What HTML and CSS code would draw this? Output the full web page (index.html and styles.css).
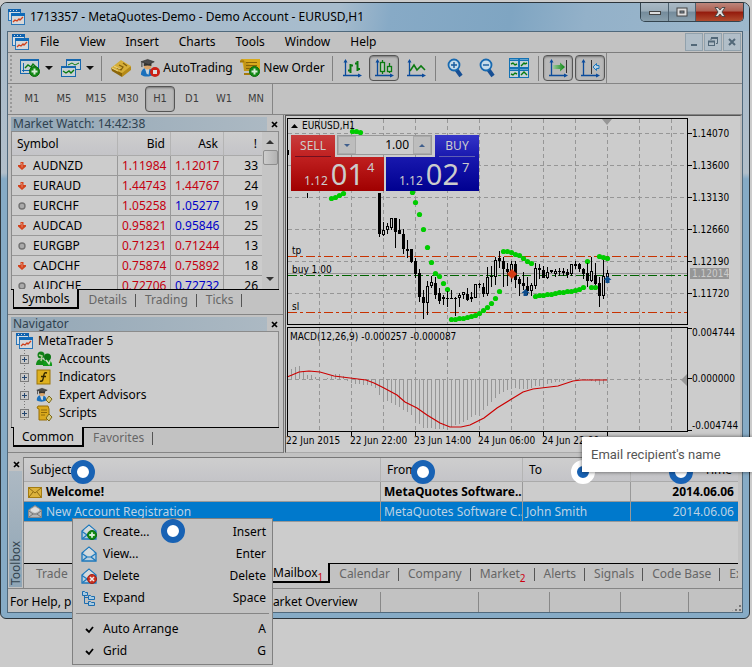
FILE: index.html
```html
<!DOCTYPE html>
<html lang="en">
<head>
<meta charset="utf-8">
<title>1713357 - MetaQuotes-Demo - Demo Account - EURUSD,H1</title>
<link rel="stylesheet" href="styles.css">
</head>
<body>
<svg class="defs" width="0" height="0" aria-hidden="true">
  <defs>
    <linearGradient id="gold" x1="0" y1="0" x2="1" y2="1"><stop offset="0" stop-color="#e0c04a"/><stop offset="1" stop-color="#a87a00"/></linearGradient>
    <linearGradient id="arrowGreen"><stop offset="0" stop-color="#9cc89c"/><stop offset="1" stop-color="#0a8a10"/></linearGradient>
    <symbol id="app" viewBox="0 0 17 16">
      <rect x="0.5" y="0.5" width="12" height="11" fill="#d5dde4" stroke="#2a76b8"/><rect x="0" y="0" width="13" height="3" fill="#0f62ae"/>
      <path d="M2 1.5h1M5 1.5h1M8 1.5h1" stroke="#c8d8e6"/>
      <rect x="3.5" y="4.500" width="13" height="11" fill="#d8d8d8" stroke="#2a76b8"/><rect x="3" y="4" width="14" height="3" fill="#0f6ab8"/>
      <path d="M5 13l2-2 2 1 2-2 1 1 3-3" fill="none" stroke="#d0401c" stroke-width="1.300"/>
    </symbol>
    <symbol id="plus" viewBox="0 0 11 11"><circle cx="5.500" cy="5.500" r="5" fill="#128a14" stroke="#0a6a0c"/><path d="M5.500 2.500v6M2.500 5.500h6" stroke="#d8ecd8" stroke-width="2"/></symbol>
    <symbol id="hat" viewBox="0 0 20 20">
      <path d="M1 17c0-5 3-7 6-7s7 2 7 7c-3 2-9 3-13 0z" fill="#1a70bc"/><path d="M5 10h5l-1 7-2-1z" fill="#c8d4dc"/>
      <circle cx="8" cy="7.500" r="4" fill="#d8a468"/><path d="M4 5h8v3c-2-1-6-1-8 0z" fill="#333"/>
      <path d="M1 3.500L8 1l7 2.500L9 6.500z" fill="#4a4a4a" stroke="#222" stroke-width=".6"/><path d="M2 4v5" stroke="#333"/>
    </symbol>
    <symbol id="openmail" viewBox="0 0 16 16">
      <path d="M1 7l7-6 7 6v8H1z" fill="#b9cfde" stroke="#1c78bc" stroke-width="1.300"/>
      <path d="M3.500 8V5.500L8 2l4.500 3.500V8L8 10.500z" fill="#d4dadd"/>
      <path d="M1 7.500l5 3.500h4l5-3.500M1.500 14.500L6 11M14.500 14.500L10 11" fill="none" stroke="#1c78bc" stroke-width="1.200"/>
    </symbol>
    <symbol id="axes" viewBox="0 0 20 19"><path d="M3.500 2v15M1 16.500h17" stroke="#0b4b9c" stroke-width="1.300" fill="none"/><path d="M1.500 3.500L3.500 0l2 3.500zM16 14.500l4 2-4 2z" fill="#0b4b9c"/></symbol>
    <symbol id="down" viewBox="0 0 8 8"><path d="M2.500 0h3v3H8v1.500L4 8 0 4.500V3h2.500z" fill="#d2421c"/><path d="M3 1.500h1v4" stroke="#e88868" fill="none"/></symbol>
    <symbol id="flat" viewBox="0 0 8 8"><circle cx="4" cy="4" r="3" fill="#aaa" stroke="#737373" stroke-width="1.400"/></symbol>
  </defs>
</svg>

<div class="window">
  <header class="titlebar">
    <svg class="app-icon" width="17" height="16"><use href="#app"/></svg>
    <h1 class="title">1713357 - MetaQuotes-Demo - Demo Account - EURUSD,H1</h1>
    <div class="caption-buttons">
      <button class="cap min" aria-label="Minimize"><svg width="12" height="10"><rect x=".5" y="4.500" width="11" height="3" fill="#ddd" stroke="#444"/></svg></button>
      <button class="cap max" aria-label="Maximize"><svg width="12" height="10"><rect x="1" y="1" width="10" height="8" fill="#ddd" stroke="#444"/><rect x="4" y="4" width="4" height="2" fill="#789" stroke="#444"/></svg></button>
      <button class="cap close" aria-label="Close"><svg width="12" height="10"><path d="M1 .5h3l2 2.500 2-2.500h3L8 5l3 4.500H8L6 7 4 9.500H1L4 5z" fill="#ddd" stroke="#444" stroke-width=".9"/></svg></button>
    </div>
  </header>

  <div class="client">
    <nav class="menubar">
      <svg class="menu-icon" width="17" height="16"><use href="#app"/></svg>
      <button>File</button><button>View</button><button>Insert</button><button>Charts</button><button>Tools</button><button>Window</button><button>Help</button>
      <div class="mdi">
        <button aria-label="Minimize chart"><svg width="10" height="10"><path d="M2 8h6" stroke="#526878" stroke-width="2"/></svg></button>
        <button aria-label="Restore chart"><svg width="10" height="10"><path d="M3 3V1.500h6.500v5H8" fill="none" stroke="#526878"/><path d="M3 1h7" stroke="#526878" stroke-width="2"/><rect x=".5" y="4.500" width="6" height="4" fill="none" stroke="#526878"/><path d="M0 4.500h7" stroke="#526878" stroke-width="2"/></svg></button>
        <button aria-label="Close chart"><svg width="10" height="10"><path d="M2 2l6 6M8 2L2 8" stroke="#526878" stroke-width="2"/></svg></button>
      </div>
    </nav>

    <div class="toolrow">
      <div class="toolbar">
        <i class="grip"></i>
        <button class="tool wide" aria-label="New chart">
          <svg width="21" height="20"><rect x=".500" y="1.500" width="18" height="14" fill="#c8d0d4" stroke="#1768ae"/><path d="M0 2h19" stroke="#1768ae" stroke-width="2"/><path d="M3.500 5v9M2 12.500h14" stroke="#1768ae"/><path d="M5 10l3-3 3 2 2-3 3 3" fill="none" stroke="#0a7a10" stroke-width="1.400"/><use href="#plus" x="9" y="8" width="11" height="11"/></svg>
          <i class="caret"></i>
        </button>
        <button class="tool wide" aria-label="Profiles">
          <svg width="21" height="20"><rect x="5.500" y="1.500" width="14" height="10" fill="#c8d0d4" stroke="#1768ae"/><path d="M5 2h15" stroke="#1768ae" stroke-width="2"/><path d="M7 7l4-2 3 2 4-2" stroke="#0a7a10" fill="none"/><rect x=".500" y="8.500" width="14" height="10" fill="#c8d0d4" stroke="#1768ae"/><path d="M0 9h15" stroke="#1768ae" stroke-width="2"/><path d="M2 13l3 2 3-2 2 2 3-3" fill="none" stroke="#0a7a10" stroke-width="1.400"/></svg>
          <i class="caret"></i>
        </button>
        <i class="sep"></i>
        <button class="tool" aria-label="Market depth"><svg width="21" height="18"><path d="M0 9L10 1l10 7-9 9z" fill="url(#gold)"/><path d="M0 9l11 5v4L1 12z" fill="#8b6508"/><path d="M11 14l9-7v4l-9 7z" fill="#b58a18"/><path d="M0 9L11 2l9 5-9 7z" fill="#d6ae38"/><path d="M8 6l4 2-2 3-4-2M12 4l4 3" stroke="#82600c" stroke-width="1.300" fill="none"/><path d="M1 9l6 3M3 7l6 3" stroke="#ead487"/></svg></button>
        <button class="tool auto"><svg width="21" height="20"><use href="#hat" width="19" height="20"/><circle cx="15" cy="14" r="5" fill="#cc2015"/><rect x="13" y="12" width="4" height="4" fill="#ddd"/></svg>AutoTrading</button>
        <button class="tool order"><svg width="21" height="20"><path d="M2 1h18v12H4z" fill="#d7a91c"/><path d="M2 1c-2 0-2 3 0 3h2v9h15" fill="#c19416"/><path d="M6 4.500h11M6 7.500h11M6 10.500h6" stroke="#866408" stroke-width="1.200"/><path d="M0 3.500h4M4 16h6" stroke="#a57a08" stroke-width="2"/><use href="#plus" x="9" y="8" width="11" height="11"/></svg>New Order</button>
        <i class="sep"></i>
        <button class="tool" aria-label="Bar chart"><svg width="20" height="19"><use href="#axes" width="20" height="19"/><path d="M8.500 5v9M6 11.500h2M9 6.500h2M15.500 2v10M13 4.500h2M16 10h2" stroke="#0a7a10" stroke-width="2"/></svg></button>
        <button class="tool on" aria-label="Candlesticks"><svg width="20" height="19"><use href="#axes" width="20" height="19"/><path d="M8.500 1v14M15.500 4v10" stroke="#0a7a10" stroke-width="1.300"/><rect x="6.500" y="3.500" width="4" height="9" fill="#bcc8bc" stroke="#0a7a10" stroke-width="1.300"/><rect x="13.500" y="7.500" width="4" height="5" fill="#bcc8bc" stroke="#0a7a10" stroke-width="1.300"/></svg></button>
        <button class="tool" aria-label="Line chart"><svg width="20" height="19"><use href="#axes" width="20" height="19"/><path d="M4 12l4-6 3 5 4-4 4 4" fill="none" stroke="#0a7a10" stroke-width="1.600"/></svg></button>
        <i class="sep"></i>
        <button class="tool lens" aria-label="Zoom in"><svg width="17" height="20"><path d="M9 11l5 7" stroke="#174f94" stroke-width="4"/><circle cx="7" cy="7" r="5.500" fill="#c5dcea" stroke="#1769b0" stroke-width="1.800"/><path d="M7 4v6M4 7h6" stroke="#155a9d" stroke-width="1.400"/></svg></button>
        <button class="tool lens" aria-label="Zoom out"><svg width="17" height="20"><path d="M9 11l5 7" stroke="#174f94" stroke-width="4"/><circle cx="7" cy="7" r="5.500" fill="#c5dcea" stroke="#1769b0" stroke-width="1.800"/><path d="M4 7h6" stroke="#155a9d" stroke-width="1.400"/></svg></button>
        <button class="tool" aria-label="Tile windows"><svg width="20" height="20"><rect width="20" height="20" fill="#1472b4"/><path d="M1 3h8v6H1zM11 3h8v6h-8zM1 13h8v6H1zM11 13h8v6h-8z" fill="#c6d2d8"/><path d="M1 1.500h8M11 1.500h8M1 11.500h8M11 11.500h8" stroke="#5fa2cf"/><path d="M2 6l2-1 2 2 2-1M12 8l3-3 1 1 2-1M2 16l2 1 2-2 2 1M12 17l3-3 3 3" fill="none" stroke="#0a7a10" stroke-width="1.400"/></svg></button>
        <i class="sep"></i>
        <button class="tool on" aria-label="Auto scroll"><svg width="20" height="19"><use href="#axes" width="20" height="19"/><path d="M18.500 1v13" stroke="#333"/><path d="M5 6h7V3.500L17 8l-5 4.500V10H5z" fill="url(#arrowGreen)"/></svg></button>
        <button class="tool on" aria-label="Chart shift"><svg width="20" height="19"><use href="#axes" width="20" height="19"/><path d="M11.500 1v14" stroke="#333"/><path d="M13 8l3.500-3.500v2H19v3h-2.500v2z" fill="#b8d2e4" stroke="#1b78bf"/></svg></button>
      </div>
    </div>

    <div class="toolrow">
      <div class="toolbar frames">
        <i class="grip"></i>
        <button>M1</button><button>M5</button><button>M15</button><button>M30</button><button class="on">H1</button><button>D1</button><button>W1</button><button>MN</button>
      </div>
    </div>

    <main class="workspace">
      <aside class="side">
        <section class="panel">
          <div class="panel-head"><h2>Market Watch: 14:42:38</h2><button class="x" aria-label="Close Market Watch"><svg width="7" height="7"><path d="M1 1l5 5M6 1L1 6" stroke="#000" stroke-width="1.700"/></svg></button></div>
          <div class="watch">
            <table class="quotes">
              <colgroup><col class="c-sym"><col class="c-price"><col class="c-price"><col class="c-spread"></colgroup>
              <thead><tr><th>Symbol</th><th>Bid</th><th>Ask</th><th>!</th></tr></thead>
              <tbody>
                <tr><td><svg width="8" height="8"><use href="#down"/></svg>AUDNZD</td><td class="r">1.11984</td><td class="r">1.12017</td><td>33</td></tr>
                <tr><td><svg width="8" height="8"><use href="#down"/></svg>EURAUD</td><td class="r">1.44743</td><td class="r">1.44767</td><td>24</td></tr>
                <tr><td><svg width="8" height="8"><use href="#flat"/></svg>EURCHF</td><td class="r">1.05258</td><td class="b">1.05277</td><td>19</td></tr>
                <tr><td><svg width="8" height="8"><use href="#down"/></svg>AUDCAD</td><td class="r">0.95821</td><td class="b">0.95846</td><td>25</td></tr>
                <tr><td><svg width="8" height="8"><use href="#flat"/></svg>EURGBP</td><td class="r">0.71231</td><td class="r">0.71244</td><td>13</td></tr>
                <tr><td><svg width="8" height="8"><use href="#down"/></svg>CADCHF</td><td class="r">0.75874</td><td class="r">0.75892</td><td>18</td></tr>
                <tr><td><svg width="8" height="8"><use href="#flat"/></svg>AUDCHF</td><td class="r">0.72706</td><td class="b">0.72732</td><td>26</td></tr>
              </tbody>
            </table>
            <div class="scrollbar"><i class="up"></i><i class="thumb"></i><i class="dn"></i></div>
          </div>
          <div class="tabs"><button class="active">Symbols</button><button>Details</button><button>Trading</button><button>Ticks</button></div>
        </section>

        <section class="panel nav-panel">
          <div class="panel-head"><h2>Navigator</h2><button class="x" aria-label="Close Navigator"><svg width="7" height="7"><path d="M1 1l5 5M6 1L1 6" stroke="#000" stroke-width="1.700"/></svg></button></div>
          <ul class="tree">
            <li class="root"><svg width="17" height="16"><use href="#app"/></svg>MetaTrader 5</li>
            <li><i class="expand"></i><svg width="17" height="16"><circle cx="5" cy="4" r="3.500" fill="#118018"/><path d="M0 14c0-8 10-8 10 0z" fill="#128d18"/><path d="M3 4l3 1-1 5" fill="none" stroke="#b6cf9a" stroke-width="1.500"/><circle cx="11.500" cy="6" r="3.500" fill="#0b7512"/><path d="M7 15c-1-8 10-8 9 0z" fill="#129a1b"/><path d="M10 9l3 4 1-3" fill="none" stroke="#cfe0c4" stroke-width="1.500"/></svg>Accounts</li>
            <li><i class="expand"></i><svg width="17" height="16"><rect x="1" y="1" width="13" height="14" fill="#deb11f" stroke="#9c7508"/><path d="M11 4c-3-1-3 1-3.500 4S6.500 13 4 12M5 7.500h5" fill="none" stroke="#332600" stroke-width="1.400"/></svg>Indicators</li>
            <li><i class="expand"></i><svg width="17" height="16"><use href="#hat" width="15" height="16"/><path d="M13 9l3 3-3 4-3-3z" fill="#d8c97c" stroke="#7b6716"/></svg>Expert Advisors</li>
            <li><i class="expand"></i><svg width="17" height="16"><path d="M2 1h10l1 3v9l-2 2H3V4L1 3z" fill="#daa91c" stroke="#986f08"/><path d="M5 5h6M5 7.500h6M5 10h4" stroke="#8f6a08"/><path d="M13 9l3 3-3 4-3-3z" fill="#d8c97c" stroke="#7b6716"/></svg>Scripts</li>
          </ul>
          <div class="tabs"><button class="active">Common</button><button>Favorites</button></div>
        </section>
      </aside>

      <section class="chart">
        <svg id="plot" class="plot" viewBox="286 117 454 334" preserveAspectRatio="xMinYMin meet" role="img" aria-label="EURUSD,H1 chart"></svg>
        <div class="trade">
          <button class="deal sell"><span class="side-name">SELL</span><span class="price"><small>1.12</small><b>01</b><sup>4</sup></span></button>
          <button class="deal buy"><span class="side-name">BUY</span><span class="price"><small>1.12</small><b>02</b><sup>7</sup></span></button>
          <div class="volume"><button aria-label="Less"><i class="caret blue"></i></button><input aria-label="Volume" value="1.00"><button aria-label="More"><i class="caret blue flip"></i></button></div>
        </div>
      </section>
    </main>

    <section class="toolbox">
      <div class="strip"><button class="x" aria-label="Close Toolbox"><svg width="7" height="7"><path d="M1 1l5 5M6 1L1 6" stroke="#000" stroke-width="1.700"/></svg></button><h2>Toolbox</h2></div>
      <div class="box">
        <table class="mail">
          <colgroup><col><col class="m-from"><col class="m-to"><col class="m-time"></colgroup>
          <thead><tr><th>Subject</th><th>From</th><th>To</th><th>Time</th></tr></thead>
          <tbody>
            <tr class="unread"><td><svg width="14" height="12"><rect x=".500" y="1.500" width="13" height="10" fill="#dcb23c" stroke="#a47c10"/><path d="M1 2l6 5 6-5M1 11l4-5M13 11L9 6" fill="none" stroke="#8d6a10"/></svg>Welcome!</td><td>MetaQuotes Software...</td><td></td><td>2014.06.06</td></tr>
            <tr class="selected"><td><svg width="14" height="13"><path d="M.500 5L7 .500 13.500 5v7.500H.500z" fill="#b5b5b5" stroke="#888"/><path d="M3 6V4l4-2 4 2v2L7 8z" fill="#ddd"/><path d="M1 6l4 3h4l4-3M1 12l4-3M13 12L9 9" fill="none" stroke="#777"/></svg>New Account Registration</td><td>MetaQuotes Software C...</td><td>John Smith</td><td>2014.06.06</td></tr>
          </tbody>
        </table>
        <div class="tabs"><button class="first">Trade</button><button class="active mailbox">Mailbox<em>1</em></button><button>Calendar</button><button>Company</button><button>Market<em>2</em></button><button>Alerts</button><button>Signals</button><button>Code Base</button><button>Ex</button></div>
      </div>
    </section>

    <footer class="status"><span class="help">For Help, press F1</span><span class="profile">Market Overview</span><span class="s1"></span><span class="s2"></span><span class="s3"></span><span class="s4"></span><span class="sizer"></span></footer>
  </div>
</div>

<i class="marker m1"></i><i class="marker m2"></i><i class="marker inverse m3"></i><i class="marker m4"></i>

<div class="context" role="menu">
  <button role="menuitem"><svg width="16" height="16"><use href="#openmail"/><use href="#plus" x="6" y="6" width="10" height="10"/></svg><span>Create...</span><kbd>Insert</kbd></button>
  <button role="menuitem"><svg width="16" height="16"><use href="#openmail"/></svg><span>View...</span><kbd>Enter</kbd></button>
  <button role="menuitem"><svg width="16" height="16"><use href="#openmail"/><circle cx="11" cy="11" r="4.500" fill="#cc3322" stroke="#a02014"/><path d="M9 9l4 4M13 9l-4 4" stroke="#eee" stroke-width="1.500"/></svg><span>Delete</span><kbd>Delete</kbd></button>
  <button role="menuitem"><svg width="16" height="16"><path d="M3.500 4v9.500H7M3.500 7.500H7" fill="none" stroke="#1b6caf"/><path d="M1.500 1.500h2l1 1h2v3h-5zM7.500 5.500h2l1 1h3v3h-6zM7.500 11.500h2l1 1h3v3h-6z" fill="#a8cbe2" stroke="#1b6caf"/></svg><span>Expand</span><kbd>Space</kbd></button>
  <hr>
  <button role="menuitemcheckbox" aria-checked="true"><svg width="16" height="16"><path d="M5 8l3 3 4-5" fill="none" stroke="#000" stroke-width="1.800"/></svg><span>Auto Arrange</span><kbd>A</kbd></button>
  <button role="menuitemcheckbox" aria-checked="true"><svg width="16" height="16"><path d="M5 8l3 3 4-5" fill="none" stroke="#000" stroke-width="1.800"/></svg><span>Grid</span><kbd>G</kbd></button>
</div>
<i class="marker m5"></i>
<div class="tooltip" role="tooltip">Email recipient's name</div>
<script src="chart.js"></script>
</body>
</html>
```
FILE: styles.css
```css
* { box-sizing: border-box; }
body { margin: 0; background: #cbcbcb; font: 12px/16px "Noto Sans", "Open Sans", sans-serif; color: #000; overflow: hidden; }
button { font: inherit; color: inherit; border: 0; padding: 0; margin: 0; background: none; }
h1, h2 { font: inherit; margin: 0; }
svg { display: block; flex: none; }
.defs { position: absolute; }

.window { margin: 2px 2px 0 0; border: 1px solid #2c343a; border-radius: 7px 7px 6px 6px; padding: 0 6px 5px; background: linear-gradient(#a5bacb 0, #b2bfca 170px, #86abc6 176px, #86abc6 100%); }
.titlebar { display: flex; align-items: flex-start; height: 28px; margin: 0 -6px; padding-left: 7px; border-radius: 6px 6px 0 0; background: linear-gradient(100deg, #a9bccb 0, #a7bccd 45%, #87aac6 52%, #7fa5c2 68%, #93b1c9 78%, #9db8cc 100%); }
.app-icon { margin: 6px 5px 0 0; }
.title { flex: 1; line-height: 28px; white-space: nowrap; }
.caption-buttons { display: flex; margin-right: 5px; border: 1px solid #33444f; border-top: 0; border-radius: 0 0 5px 5px; overflow: hidden; }
.cap { height: 18px; display: grid; place-items: center; border-right: 1px solid #4d606e; background: linear-gradient(#a9b9c5 0, #9badb9 45%, #748b9b 50%, #899fac 100%); }
.cap.min { width: 28px; }
.cap.max { width: 27px; }
.cap.close { width: 47px; border: 0; background: linear-gradient(#bd867c 0, #ae5e50 45%, #941a0c 50%, #b04b2e 100%); }
.client { border: 1px solid #50697c; background: #c2c2c2; }

.menubar { display: flex; align-items: center; height: 21px; padding-left: 4px; gap: 20px; border-bottom: 1px solid #7d7d7d; }
.menu-icon { margin-right: -9px; }
.mdi { display: flex; gap: 1px; margin: 0 1px 0 auto; }
.mdi button { width: 18px; height: 18px; display: grid; place-items: center; border: 1px solid #91a1ac; background: #b1bec8; }

.toolrow { height: 31px; border-bottom: 1px solid #858585; }
.toolbar { display: inline-flex; align-items: center; height: 30px; border-right: 1px solid #858585; }
.grip { width: 4px; height: 26px; margin: 0 2px; background: repeating-linear-gradient(#999 0 2px, #c2c2c2 2px 4px) 0 0 / 2px 100% no-repeat; }
.sep { width: 1px; height: 25px; margin: 0 3px; background: #808080; }
.tool { display: flex; align-items: center; justify-content: center; width: 30px; height: 26px; margin: 0 1px; gap: 2px; white-space: nowrap; }
.tool.wide { width: 39px; gap: 4px; }
.tool.auto { width: 97px; }
.tool.order { width: 91px; }
.on { border: 1px solid #555; border-radius: 4px; background: #b9b9b9; box-shadow: inset 0 1px 2px #777; }
.caret { border: 4px solid transparent; border-top-color: #111; border-bottom: 0; }
.caret.blue { border-width: 3px; border-bottom: 0; border-top-color: #3f5e8c; display: block; }
.caret.flip { transform: rotate(180deg); }
.frames button { width: 32px; height: 26px; font: 11px/24px "DejaVu Sans Condensed", sans-serif; color: #3c3c3c; }
.frames .on { width: 30px; margin: 0 1px; }

.workspace { display: flex; }
.side { flex: 0 0 276px; border-right: 1px solid #777; }
.panel { padding: 2px 4px 0 3px; height: 199px; }
.nav-panel { height: 139px; border-top: 1px solid #858585; border-bottom: 1px solid #858585; }
.panel-head { display: flex; justify-content: space-between; align-items: center; height: 14px; margin-right: -2px; }
.panel-head h2 { flex: 1; padding-left: 2px; line-height: 14px; color: #30424f; background: linear-gradient(90deg, #93a7b6, #acb9c3); }
.x { width: 14px; height: 14px; display: grid; place-items: center; }
.watch { display: flex; height: 158px; overflow: hidden; background: #ccc; border: 1px solid #8b8b8b; border-width: 1px 1px 0; }
table { border-collapse: separate; border-spacing: 0; table-layout: fixed; }
th { font-weight: normal; text-align: left; }
td, th { padding: 0; overflow: hidden; white-space: nowrap; }
.quotes { flex: 1; width: 100px; }
.c-price { width: 53px; }
.c-spread { width: 38px; }
.quotes th { height: 24px; background: linear-gradient(#cecece, #c4c4c8); border-right: 1px solid #b4b4b4; border-bottom: 1px solid #aaa; padding: 0 5px; }
.quotes td { height: 20px; border-right: 1px solid #999; border-bottom: 1px solid #999; padding: 0 4px; line-height: 19px; }
.quotes tr > :not(:first-child) { text-align: right; }
.quotes tr > :last-child { border-right: 0; }
.quotes td svg { display: inline-block; margin: 0 7px 0 2px; }
.quotes .r { color: #c40010; }
.quotes .b { color: #0000c8; }
.scrollbar { width: 16px; display: flex; flex-direction: column; align-items: center; background: #c5c5c5; padding: 8px 0; }
.up, .dn { border: 4px solid transparent; border-top: 0; border-bottom-color: #333; }
.dn { margin-top: auto; border-top: 4px solid #333; border-bottom: 0; }
.thumb { width: 15px; height: 15px; margin-top: 6px; border: 1px solid #8d8d8d; border-radius: 2px; background: linear-gradient(90deg, #cdcdcd, #b2b2b2); }

.tabs { display: flex; height: 20px; padding-left: 2px; border-top: 1px solid #000; color: #666; }
.tabs button { flex: none; padding: 0 9px; line-height: 19px; height: 19px; background: linear-gradient(#555, #555) right 4px / 1px 13px no-repeat; }
.tabs .active { height: 20px; margin-top: -1px; padding: 0 8px; color: #000; background: #ccc; border: 1px solid #000; border-top: 0; border-right-width: 2px; border-bottom-width: 2px; }

.tree { list-style: none; margin: 0; padding: 0; height: 96px; background: #ccc; border: 1px solid #8b8b8b; border-width: 1px 1px 0; }
.tree li { display: flex; align-items: center; height: 18px; padding-left: 8px; gap: 6px; background: repeating-linear-gradient(#777 0 1px, transparent 1px 3px) 12px 0 / 1px 100% no-repeat; }
.tree .root { padding-left: 4px; gap: 5px; background: none; }
.expand { width: 9px; height: 9px; margin-right: 1px; border: 1px solid #7c7c7c; background: linear-gradient(#24466e, #24466e) center / 5px 1px no-repeat, linear-gradient(#24466e, #24466e) center / 1px 5px no-repeat, #c8c8c8; outline: 1px solid #ccc; }

.chart { position: relative; flex: 1; min-width: 0; border-left: 1px solid #555; border-top: 1px solid #555; margin-left: 1px; background: #ccc; border-right: 2px solid #bbb; border-bottom: 1px solid #aaa; }
.plot { width: 100%; height: 334px; font: 10px "DejaVu Sans Condensed", "DejaVu Sans", sans-serif; margin-top: 1px; }
.trade { position: absolute; left: 5px; top: 19px; display: flex; gap: 2px; }
.deal { width: 93px; height: 56px; display: flex; flex-direction: column; color: #ccc; text-align: left; }
.sell { background: linear-gradient(#c83c3c 0, #c02020 22px, #a00000 56px); clip-path: polygon(0 0, 44px 0, 44px 22px, 100% 22px, 100% 100%, 0 100%); }
.buy { background: linear-gradient(#3535c8 0, #1818ae 22px, #000090 56px); clip-path: polygon(49px 0, 100% 0, 100% 100%, 0 100%, 0 22px, 49px 22px); align-items: flex-end; }
.side-name { width: 36px; margin: 0 4px; height: 22px; line-height: 22px; text-align: center; border-bottom: 1px solid #701020; }
.buy .side-name { border-color: #6060b4; }
.price { display: flex; width: 100%; height: 34px; padding-left: 13px; align-items: baseline; }
.price small { font-size: 12px; }
.price b { font: 29px/34px "Noto Sans", sans-serif; margin-left: 3px; }
.price sup { font-size: 13px; line-height: 14px; align-self: flex-start; margin: 3px 0 0 3px; }
.volume { position: absolute; left: 46px; top: 0; width: 95px; height: 20px; display: flex; border: 1px solid #999; background: #ccc; }
.volume button { width: 18px; display: grid; place-items: center; background: #bdbdbd; border: 1px solid #aaa; }
.volume input { flex: 1; min-width: 0; font: inherit; text-align: right; border: 0; padding: 0 4px; background: none; }

.toolbox { display: flex; height: 135px; padding: 4px 4px 0 1px; }
.strip { width: 14px; display: flex; flex-direction: column; }
.strip h2 { writing-mode: vertical-rl; transform: rotate(180deg); flex: 1; line-height: 13px; margin: 0 1px 1px 0; padding-top: 2px; color: #33444f; background: linear-gradient(#8fa5b5, #adb9c3); }
.box { flex: 1; min-width: 0; border-left: 1px solid #888; border-top: 1px solid #777; background: #ccc; display: flex; flex-direction: column; overflow: hidden; }
.mail { width: 100%; }
.m-from { width: 142px; }
.m-to { width: 108px; }
.m-time { width: 107px; }
.mail th { height: 24px; background: linear-gradient(#cecece, #c4c4c8); border-right: 1px solid #b4b4b4; border-bottom: 1px solid #aaa; padding: 0 6px; }
.mail td { height: 20px; border-right: 1px solid #999; border-bottom: 1px solid #999; padding: 0 0 0 3px; line-height: 19px; }
.mail td:first-child { padding-left: 4px; }
.mail td svg { display: inline-block; vertical-align: middle; margin: -2px 4px 0 0; }
.mail tr > :last-child { text-align: right; border-right: 0; }
.mail td:last-child { padding-right: 4px; }
.unread { font-weight: bold; }
.selected { background: #0079cc; color: #bcd2e4; }
.box .tabs { margin-top: auto; height: 25px; background: #c2c2c2; padding-left: 3px; flex: none; white-space: nowrap; }
.tabs .first { width: 239px; text-align: left; background: none; }
.tabs .mailbox { padding: 0 5px 0 6px; }
.tabs em { font: 10px/10px "Noto Sans", sans-serif; color: #cc0010; position: relative; top: 4px; }
.status { display: flex; height: 24px; border-top: 1px solid #858585; white-space: nowrap; }
.status span { border-right: 1px solid #888; margin-top: 3px; line-height: 20px; }
.status .help { width: 250px; padding-left: 2px; border: 0; }
.profile { flex: 1; padding-left: 4px; }
.s1 { width: 98px; }
.s2, .s3 { width: 71px; }
.s4 { width: 68px; }
.status .sizer { width: 53px; border: 0; background: radial-gradient(#777 1px, transparent 1px) right bottom / 4px 4px; clip-path: polygon(100% 50%, 100% 100%, 42px 100%); }

.marker { position: absolute; width: 24px; height: 24px; border-radius: 50%; border: 6px solid #1862b4; background: #fff; }
.inverse { border-color: #fff; background: #1862b4; }
.m1 { left: 71px; top: 460px; }
.m2 { left: 411px; top: 460px; }
.m3 { left: 571px; top: 460px; }
.m4 { left: 669px; top: 460px; }
.m5 { left: 161px; top: 519px; }
.context { position: absolute; left: 72px; top: 518px; width: 201px; padding: 2px 3px; border: 1px solid #808080; background: #c2c2c2; }
.context button { display: flex; align-items: center; width: 100%; height: 22px; padding: 0 3px 0 5px; }
.context span { flex: 1; text-align: left; margin-left: 6px; }
.context kbd { font: inherit; }
.context hr { margin: 4px 0; border: 0; border-top: 1px solid #858585; }
.tooltip { position: absolute; left: 582px; right: 0; top: 437px; height: 35px; padding-left: 9px; line-height: 35px; background: #fff; color: #555; font-family: Roboto, "Noto Sans", sans-serif; font-size: 13px; box-shadow: 0 0 4px rgba(0, 0, 0, .6); white-space: nowrap; }
```
FILE: chart.js
```js
// Candles: x, high, low, body top, body bottom, filled
const candles = [
  [379,193,237,193,234,1],[383,222,236,230,235,0],[387,223,234,226,230,0],[391,218,230,218,228,0],[395,218,248,218,232,1],
  [399,219,234,230,234,1],[403,229,254,234,249,1],[407,240,258,249,251,1],[411,249,263,249,262,1],[415,258,278,261,274,1],
  [419,269,302,273,297,1],[423,290,319,297,303,1],[427,281,315,286,303,0],[431,276,288,282,286,0],[435,277,299,283,295,1],
  [439,288,304,293,301,1],[443,295,305,297,299,1],[447,291,307,298,299,1],[451,290,298,298,299,1],[455,297,316,298,299,1],
  [459,293,307,295,298,0],[463,292,299,292,295,0],[467,288,301,294,300,1],[471,292,302,297,299,0],[475,284,298,284,298,0],
  [479,283,288,284,285,1],[483,283,297,287,294,1],[487,267,296,277,294,0],[491,266,287,276,277,1],[495,257,285,260,277,0],
  [499,251,268,258,261,1],[503,257,287,261,269,1],[507,263,286,269,272,1],[511,261,282,264,274,0],[515,261,288,264,280,1],
  [519,277,296,279,284,1],[523,272,290,283,286,1],[527,277,295,286,291,1],[531,283,296,285,291,0],[535,263,289,268,286,0],
  [539,264,279,268,270,1],[543,266,278,270,278,1],[547,267,279,272,278,0],[551,270,273,270,272,1],[555,269,277,271,274,0],
  [559,268,276,271,272,1],[563,268,276,271,273,1],[567,269,278,272,275,1],[571,264,276,264,274,0],[575,261,269,264,266,1],
  [579,263,272,264,269,1],[583,268,279,269,274,1],[587,263,287,273,281,1],[591,257,282,271,281,0],[595,263,285,275,284,1],
  [599,277,307,283,296,1],[603,260,299,276,296,0],[607,270,277,273,277,0]
];
// Parabolic SAR points
const sar = [
  [331,198],[335,197],[339,195],[343,193],[352,131],[356,131],[360,132],[412,192],[415,202],[419,214],[423,229],[427,247],[431,262],
  [435,273],[439,276],[443,283],[447,289],[451,319],[455,319],[459,318],[463,318],[467,317],[471,316],[475,315],[479,313],[483,310],
  [487,307],[491,303],[495,298],[499,291],[503,251],[507,251],[511,252],[515,254],[519,255],[523,258],[527,261],[531,263],[535,296],
  [539,295],[543,295],[547,294],[551,294],[555,293],[559,292],[563,292],[567,291],[571,291],[575,290],[579,289],[583,287],[587,261],
  [591,287],[595,287],[599,256],[603,257],[607,258]
];
// MACD histogram ends, every 4px from x = 291
const macd = [369,367,366,372,375,375,377,378,379,378,376,374,374,376,381,383,384,384,385,385,386,388,395,400,401,403,405,407,410,412,
  415,421,424,428,428,428,429,429,429,428,427,425,424,422,420,417,415,412,410,406,402,398,394,392,390,389,388,389,389,389,388,
  386,386,385,384,383,382,382,381,380,380,380,378,380,380,381,382,385,384,383];
const signal = "287,377 292,375 299,372 309,371 320,372 334,376 350,378 366,380 374,383 384,388 397,395 405,402 417,408 427,415 440,423 450,427 461,427 470,425 484,418 497,408 510,400 523,392 533,389 558,386 573,381 581,380 607,380";

let s = '<g shape-rendering="crispEdges" fill="none">';
const line = (d, color, extra = "") => { s += `<path d="${d}" stroke="${color}" ${extra}/>`; };
let grid = "";
for (let x = 319; x < 687; x += 32) grid += `M${x}.5 119V324M${x}.5 328V431`;
for (let y = 133; y < 320; y += 32) grid += `M288 ${y}.5H687`;
grid += "M288 379.5H687";
line(grid, "#969696", 'stroke-dasharray="4 3"');
line("M288 273.5H687", "#969696");
line("M288 256.5H687M288 312.5H687", "#c83200", 'stroke-dasharray="9 3 3 3"');
line("M288 275.5H687", "#006400", 'stroke-dasharray="9 3 3 3"');
line(macd.slice(0, 80).map((y, i) => `M${291 + 4 * i}.5 379V${y}`).join(""), "#969696");
s += `</g><polyline points="${signal}" fill="none" stroke="#cc0000" stroke-width="1.2"/><g fill="#00cc00">`;
s += sar.map(([x, y]) => `<circle cx="${x + .5}" cy="${y + .5}" r="2.6"/>`).join("") + '</g><g shape-rendering="crispEdges">';
line("M307.500 193V198M288.500 150V155", "#000");
for (const [x, hi, lo, top, bottom, filled] of candles) {
  line(`M${x}.5 ${hi}V${lo}`, "#000");
  s += filled
    ? `<rect x="${x - 1}" y="${top}" width="3" height="${bottom - top}"/>`
    : `<rect x="${x - .5}" y="${top + .5}" width="2" height="${bottom - top - 1}" fill="#ccc" stroke="#000"/>`;
}
s += '<g fill="none">';
line("M287.5 324.5V118.500H687.5V324.500H287.500M287.5 431V327.500H687.5V431.500H287.500", "#000");
let ticks = "M687 328.500H692M687 378.500H692M687 430.500H692";
for (let y = 133; y < 320; y += 32) ticks += `M687 ${y}.5H692`;
for (let x = 287; x < 620; x += 64) ticks += `M${x}.5 431V436`;
line(ticks, "#000");
s += '</g></g><path d="M602 119h10l-5 6zM687 374v12l-6-6z" fill="#969696"/>';
s += '<path d="M512 269l5 5-5 5-5-5z" fill="#d23c14"/><path d="M525.500 289l4 4h-2v3h-4v-3h-2zM607.500 276l4 4h-2v3h-4v-3h-2z" fill="#0c4c8c"/>';
s += '<path d="M291 128l3.500-4 3.500 4z"/><rect x="690" y="268" width="39" height="11" fill="#969696"/>';
const text = (x, y, t, fill = "#000") => { s += `<text x="${x}" y="${y}" fill="${fill}">${t}</text>`; };
text(302, 129, "EURUSD,H1");
text(292, 254, "tp");
text(292, 273, "buy 1.00");
text(292, 310, "sl");
text(290, 340, "MACD(12,26,9) -0.000257 -0.000087");
["1.14070", "1.13600", "1.13130", "1.12660", "1.12190", "1.11720"].forEach((t, i) => text(692, 137 + 32 * i, t));
text(692, 277, "1.12014", "#ccc");
text(692, 336, "0.004744");
text(692, 382, "0.000000");
text(692, 429, "-0.004744");
["22 Jun 2015", "22 Jun 22:00", "23 Jun 14:00", "24 Jun 06:00", "24 Jun 22:00"].forEach((t, i) => text(286 + 64 * i, 444, t));
document.getElementById("plot").innerHTML = s;
```
